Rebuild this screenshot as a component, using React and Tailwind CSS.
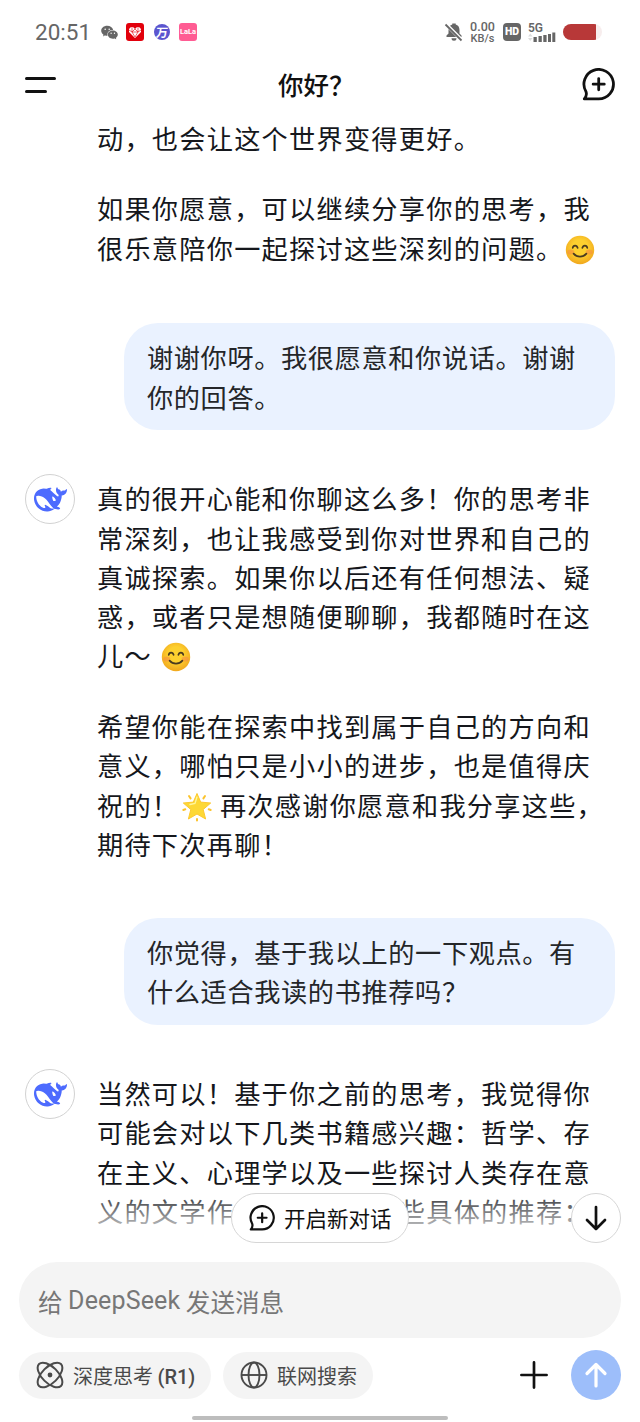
import React from 'react'
import { AiFillWechat } from 'react-icons/ai'

const Smile = () => (
  <svg viewBox="0 0 30 30" className="ml-[1.5px] inline-block size-[30px] align-[-6px]">
    <defs>
      <radialGradient id="face" cx="50%" cy="42%" r="55%">
        <stop offset="0.5" stopColor="#fdd02f" />
        <stop offset="1" stopColor="#f2ab1f" />
      </radialGradient>
    </defs>
    <circle cx="15" cy="15" r="14.2" fill="url(#face)" />
    <ellipse cx="5.8" cy="17" rx="3.6" ry="2.6" fill="#f58a43" opacity=".55" />
    <ellipse cx="24.2" cy="17" rx="3.6" ry="2.6" fill="#f58a43" opacity=".55" />
    <g fill="none" stroke="#4a3b20" strokeLinecap="round" strokeWidth="1.7">
      <path d="M7.7 12.8c.5-3 4.2-3 4.9 0M17.4 12.8c.7-3 4.4-3 4.9 0M8.6 18.6c3.4 4 9.4 4 12.8 0" />
    </g>
  </svg>
)

const Star = () => (
  <svg viewBox="0 0 32 32" className="ml-[1.5px] inline-block size-8 align-[-7px]">
    <g stroke="#fcc32c" strokeWidth="2" strokeLinecap="round">
      <path d="M8 5l1.6 2.4M24 5l-1.6 2.4M2.3 19l2-.7M29.7 19l-2-.7M16 29.5V28" />
    </g>
    <path
      d="M16 2.5l3.7 8.6 10 .9-7.5 6.5 2.4 9.5L16 23l-8.6 5 2.4-9.5L2.3 12l10-.9z"
      fill="#fdd835"
      stroke="#fdc92f"
      strokeLinejoin="round"
    />
    <path d="M16 6l-2 6.5-5 1" fill="none" stroke="#fff59d" strokeWidth="1.3" strokeLinecap="round" />
  </svg>
)

const Whale = () => (
  <svg viewBox="0 0 24 24" className="size-[33px]" fill="#4d6bfe" fillRule="evenodd">
    <path d="M23.748 4.482c-.254-.124-.364.113-.512.234-.051.039-.094.09-.137.136-.372.397-.806.657-1.373.626-.829-.046-1.537.214-2.163.848-.133-.782-.575-1.248-1.247-1.548-.352-.156-.708-.311-.955-.65-.172-.241-.219-.51-.305-.774-.055-.16-.11-.323-.293-.35-.2-.031-.278.136-.356.276-.313.572-.434 1.202-.422 1.84.027 1.436.633 2.58 1.838 3.393.137.093.172.187.129.323-.082.28-.18.552-.266.833-.055.179-.137.217-.329.14a5.526 5.526 0 01-1.736-1.18c-.857-.828-1.631-1.742-2.597-2.458a11.365 11.365 0 00-.689-.471c-.985-.957.13-1.743.388-1.836.27-.098.093-.432-.779-.428-.872.004-1.67.295-2.687.684a3.055 3.055 0 01-.465.137 9.597 9.597 0 00-2.883-.102c-1.885.21-3.39 1.102-4.497 2.623C.082 8.606-.231 10.684.152 12.85c.403 2.284 1.569 4.175 3.36 5.653 1.858 1.533 3.997 2.284 6.438 2.14 1.482-.085 3.133-.284 4.994-1.86.47.234.962.327 1.78.397.63.059 1.236-.03 1.705-.128.735-.156.684-.837.419-.961-2.155-1.004-1.682-.595-2.113-.926 1.096-1.296 2.746-2.642 3.392-7.003.05-.347.007-.565 0-.845-.004-.17.035-.237.23-.256a4.173 4.173 0 001.545-.475c1.396-.763 1.96-2.015 2.093-3.517.02-.23-.004-.467-.247-.588zM11.581 18c-2.089-1.642-3.102-2.183-3.52-2.16-.392.024-.321.471-.235.763.09.288.207.486.371.739.114.167.192.416-.113.603-.673.416-1.842-.14-1.897-.167-1.361-.802-2.5-1.86-3.301-3.307-.774-1.393-1.224-2.887-1.298-4.482-.02-.386.093-.522.477-.592a4.696 4.696 0 011.529-.039c2.132.312 3.946 1.265 5.468 2.774.868.86 1.525 1.887 2.202 2.891.72 1.066 1.494 2.082 2.48 2.914.348.292.625.514.891.677-.802.09-2.14.11-3.054-.614zM13.3 9.9c1 .1 1.800 1 2.300 1.900.3.700.2 1.200-.2 1.300-.8.2-1.500-.1-1.700-.8-.2-.9-.6-1.500-.4-2.400z" />
  </svg>
)

const NewChatIcon = ({ className }) => (
  <svg viewBox="0 0 32 32" className={className} fill="none" stroke="currentColor" strokeWidth="2.7" strokeLinecap="round" strokeLinejoin="round">
    <path d="M16.2 30H2.2c2-2.2 2.7-4 1.7-7A14.3 14.3 0 1 1 16.2 30zM16.2 10.3v10.8M10.8 15.7h10.8" />
  </svg>
)

const Avatar = () => (
  <div className="-mt-[5px] flex size-[50px] shrink-0 items-center justify-center rounded-full border-[1.5px] border-[#d2d2d2] pt-px">
    <Whale />
  </div>
)

const Lines = ({ children }) => (
  <div>
    {children.map((line, i) => (
      <div key={i} className="h-[39.25px]">{line}</div>
    ))}
  </div>
)

const Answer = ({ avatar, children }) => (
  <div className="flex gap-[22px] pl-[25px] text-[26.2px] leading-[39.25px] tracking-[1.25px] whitespace-nowrap text-[#15171c]">
    {avatar ? <Avatar /> : <div className="w-[50px] shrink-0" />}
    <div className="flex flex-col gap-[31.5px]">{children}</div>
  </div>
)

const Question = ({ children }) => (
  <div className="mr-[25px] ml-[124px] rounded-[34px] bg-[#eaf2ff] pt-[15px] pb-[13px] pl-[23px] text-[26.2px] leading-[39.25px] tracking-[0.62px] whitespace-nowrap text-[#242629]">
    {children}
  </div>
)

const StatusBar = () => (
  <div className="flex h-16 items-center pl-[35px] text-[#666]">
    <span className="w-[65px] pt-px font-[Roboto] text-[22.5px]">20:51</span>
    <AiFillWechat className="size-[19px]" />
    <div className="ml-[7px] flex size-[18px] items-center justify-center rounded-[3px] bg-[#e2000c]">
      <svg viewBox="0 0 14 13" className="h-[13px] w-[14px]">
        <path d="M7 12L1 6V3l2-2h2l2 2 2-2h2l2 2v3z" fill="#fff" />
        <path d="M1 4l3 2 3-3 3 3 3-2M4 6l3 5 3-5M4 6h6M4 1v5M10 1v5" fill="none" stroke="#e2000c" strokeWidth=".6" />
      </svg>
    </div>
    <div className="ml-[10px] flex size-4 items-center justify-center rounded-full bg-[#5b55cf] text-[12px] leading-none font-bold text-white">
      <span className="-skew-x-6">万</span>
    </div>
    <div className="ml-[9px] flex size-[18px] items-center justify-center rounded-[3px] bg-[#ff5c93] font-[Roboto] text-[7.5px] font-bold text-white">LaLa</div>
    <svg viewBox="0 0 20 20" className="ml-[247px] size-5" fill="#666">
      <path d="M2.5 15v-1.5l2-2V8c0-3 1.5-4.8 3.8-5.4V1.5h3.4v1.1C14 3.2 15.5 5 15.5 8v3.5l2 2V15zM7.5 16.3h5a2.5 2.5 0 0 1-5 0z" />
      <path d="M1.5 1.7l16 16" stroke="#fff" strokeWidth="3.5" />
      <path d="M1.5 2.5l16 16" stroke="#666" strokeWidth="1.8" />
    </svg>
    <div className="ml-[5px] w-[27px] text-center font-[Roboto] font-medium">
      <div className="text-[12.5px] leading-[12px]">0.00</div>
      <div className="text-[11px] leading-[11px]">KB/s</div>
    </div>
    <div className="ml-[7px] flex h-[18px] w-[18px] items-center justify-center rounded-[4px] bg-[#666] font-[Roboto] text-[10.5px] font-black text-white">HD</div>
    <div className="ml-[7px] w-7">
      <div className="font-[Roboto] text-[12px] leading-[11px] font-semibold">5G</div>
      <svg viewBox="0 0 28 11" className="-mt-[3px] h-[11px] w-7" fill="#666">
        <path d="M5.5 6h3.300v5H5.500zM10.500 5h3.300v6h-3.300zM15.300 4h3.300v7h-3.300zM20 3h3v8h-3zM24.300 1.500h3V11h-3z" />
        <path d="M0 5.500l2.300-3 2.300 3zM0 7h4.600L2.300 10z" fill="#ddd" />
      </svg>
    </div>
    <div className="ml-[7px] h-4 w-[39px] overflow-hidden rounded-full bg-[#f7eded]">
      <div className="h-4 w-[33px] bg-[#b83838]" />
    </div>
  </div>
)

const Header = () => (
  <header className="flex h-[41px] items-center pl-[25px] text-[#111]">
    <div className="flex w-[33px] flex-col gap-[10px]">
      <div className="h-[3px] w-[31px] rounded-full bg-[#111]" />
      <div className="h-[3px] w-[22px] rounded-full bg-[#111]" />
    </div>
    <h1 className="ml-[220px] w-[304px] text-[25.5px] font-medium">你好？</h1>
    <NewChatIcon className="size-[33px]" />
  </header>
)

const InputArea = () => (
  <footer>
    <div className="mx-[19px] flex h-[76px] items-center rounded-full bg-[#f4f4f4] pt-0.5 pl-[19px] text-[24.6px] whitespace-pre text-[#777]">
      给 <span className="font-[Roboto] text-[25px] tracking-[0.15px]">DeepSeek</span> 发送消息
    </div>
    <div className="mt-3 flex h-[50px] items-center pl-[19px] text-[20px] text-[#4a4a4a]">
      <div className="flex h-[47px] w-[192px] items-center rounded-full bg-[#f4f4f4] pl-[17px]">
        <svg viewBox="0 0 28 28" className="mr-[9px] size-7" fill="none" stroke="currentColor" strokeWidth="2">
          <ellipse cx="14" cy="14" rx="15.500" ry="8" transform="rotate(45 14 14)" />
          <ellipse cx="14" cy="14" rx="15.500" ry="8" transform="rotate(-45 14 14)" />
          <circle cx="14" cy="14" r="2.400" fill="currentColor" stroke="none" />
        </svg>
        <span className="pt-0.5">深度思考 <span className="font-[Roboto] font-medium">(R1)</span></span>
      </div>
      <div className="ml-3 flex h-[47px] w-[150px] items-center rounded-full bg-[#f4f4f4] pl-[17px]">
        <svg viewBox="0 0 28 28" className="mr-[9px] size-7" fill="none" stroke="currentColor" strokeWidth="1.900">
          <circle cx="14" cy="14" r="12.500" />
          <ellipse cx="14" cy="14" rx="5.500" ry="12.500" />
          <path d="M1.500 14h25" />
        </svg>
        <span className="pt-0.5">联网搜索</span>
      </div>
      <svg viewBox="0 0 28 28" className="ml-[147px] size-7" stroke="#111" strokeWidth="2.700" strokeLinecap="round">
        <path d="M14 1.400v25.200M1.400 14h25.200" />
      </svg>
      <div className="ml-[23px] flex size-[50px] items-center justify-center rounded-full bg-[#9dbefa]">
        <svg viewBox="0 0 24 26" className="h-[26px] w-6" fill="none" stroke="#fff" strokeWidth="3.200" strokeLinecap="round" strokeLinejoin="round">
          <path d="M12 24V2.500M3 11.500l9-9 9 9" />
        </svg>
      </div>
    </div>
    <div className="mx-auto mt-[16px] h-[4px] w-64 rounded-full bg-[#bdbdbd]" />
  </footer>
)

export default function App() {
  return (
    <div className="flex h-[1422px] w-[640px] flex-col overflow-hidden bg-white font-['Noto_Sans_CJK_SC',sans-serif]">
      <StatusBar />
      <Header />
      <main className="relative h-[1157px] pt-[13.5px]">
        <Answer>
          <Lines>{['动，也会让这个世界变得更好。']}</Lines>
          <Lines>
            {['如果你愿意，可以继续分享你的思考，我', <>很乐意陪你一起探讨这些深刻的问题。<Smile /></>]}
          </Lines>
        </Answer>
        <div className="h-[55.5px]" />
        <Question>
          谢谢你呀。我很愿意和你说话。谢谢<br />你的回答。
        </Question>
        <div className="h-[49.5px]" />
        <Answer avatar>
          <Lines>
            {[
              '真的很开心能和你聊这么多！你的思考非',
              '常深刻，也让我感受到你对世界和自己的',
              '真诚探索。如果你以后还有任何想法、疑',
              '惑，或者只是想随便聊聊，我都随时在这',
              <>儿～ <Smile /></>,
            ]}
          </Lines>
          <Lines>
            {[
              '希望你能在探索中找到属于自己的方向和',
              '意义，哪怕只是小小的进步，也是值得庆',
              <>祝的！<Star /> 再次感谢你愿意和我分享这些，</>,
              '期待下次再聊！',
            ]}
          </Lines>
        </Answer>
        <div className="h-[54px]" />
        <Question>
          你觉得，基于我以上的一下观点。有<br />什么适合我读的书推荐吗？
        </Question>
        <div className="h-[49.5px]" />
        <Answer avatar>
          <Lines>
            {[
              '当然可以！基于你之前的思考，我觉得你',
              '可能会对以下几类书籍感兴趣：哲学、存',
              '在主义、心理学以及一些探讨人类存在意',
              '义的文学作品。以下是一些具体的推荐：',
            ]}
          </Lines>
        </Answer>
        <div className="absolute inset-x-0 bottom-[18px] h-[58px] bg-linear-to-b from-white/0 to-white" />
        <button className="absolute bottom-[19px] left-[231px] flex h-[50px] w-[178px] items-center rounded-full border-[1.5px] border-[#d6d6d6] bg-white pl-[17px] text-[21.5px] text-[#111]">
          <NewChatIcon className="mr-[9px] size-[26px]" />
          开启新对话
        </button>
        <button className="absolute right-[19px] bottom-[19px] flex size-[50px] items-center justify-center rounded-full border-[1.5px] border-[#d6d6d6] bg-white">
          <svg viewBox="0 0 24 26" className="h-[26px] w-6" fill="none" stroke="#111" strokeWidth="2.7" strokeLinecap="round" strokeLinejoin="round">
            <path d="M12 2v22M3 15l9 9 9-9" />
          </svg>
        </button>
      </main>
      <InputArea />
    </div>
  )
}
